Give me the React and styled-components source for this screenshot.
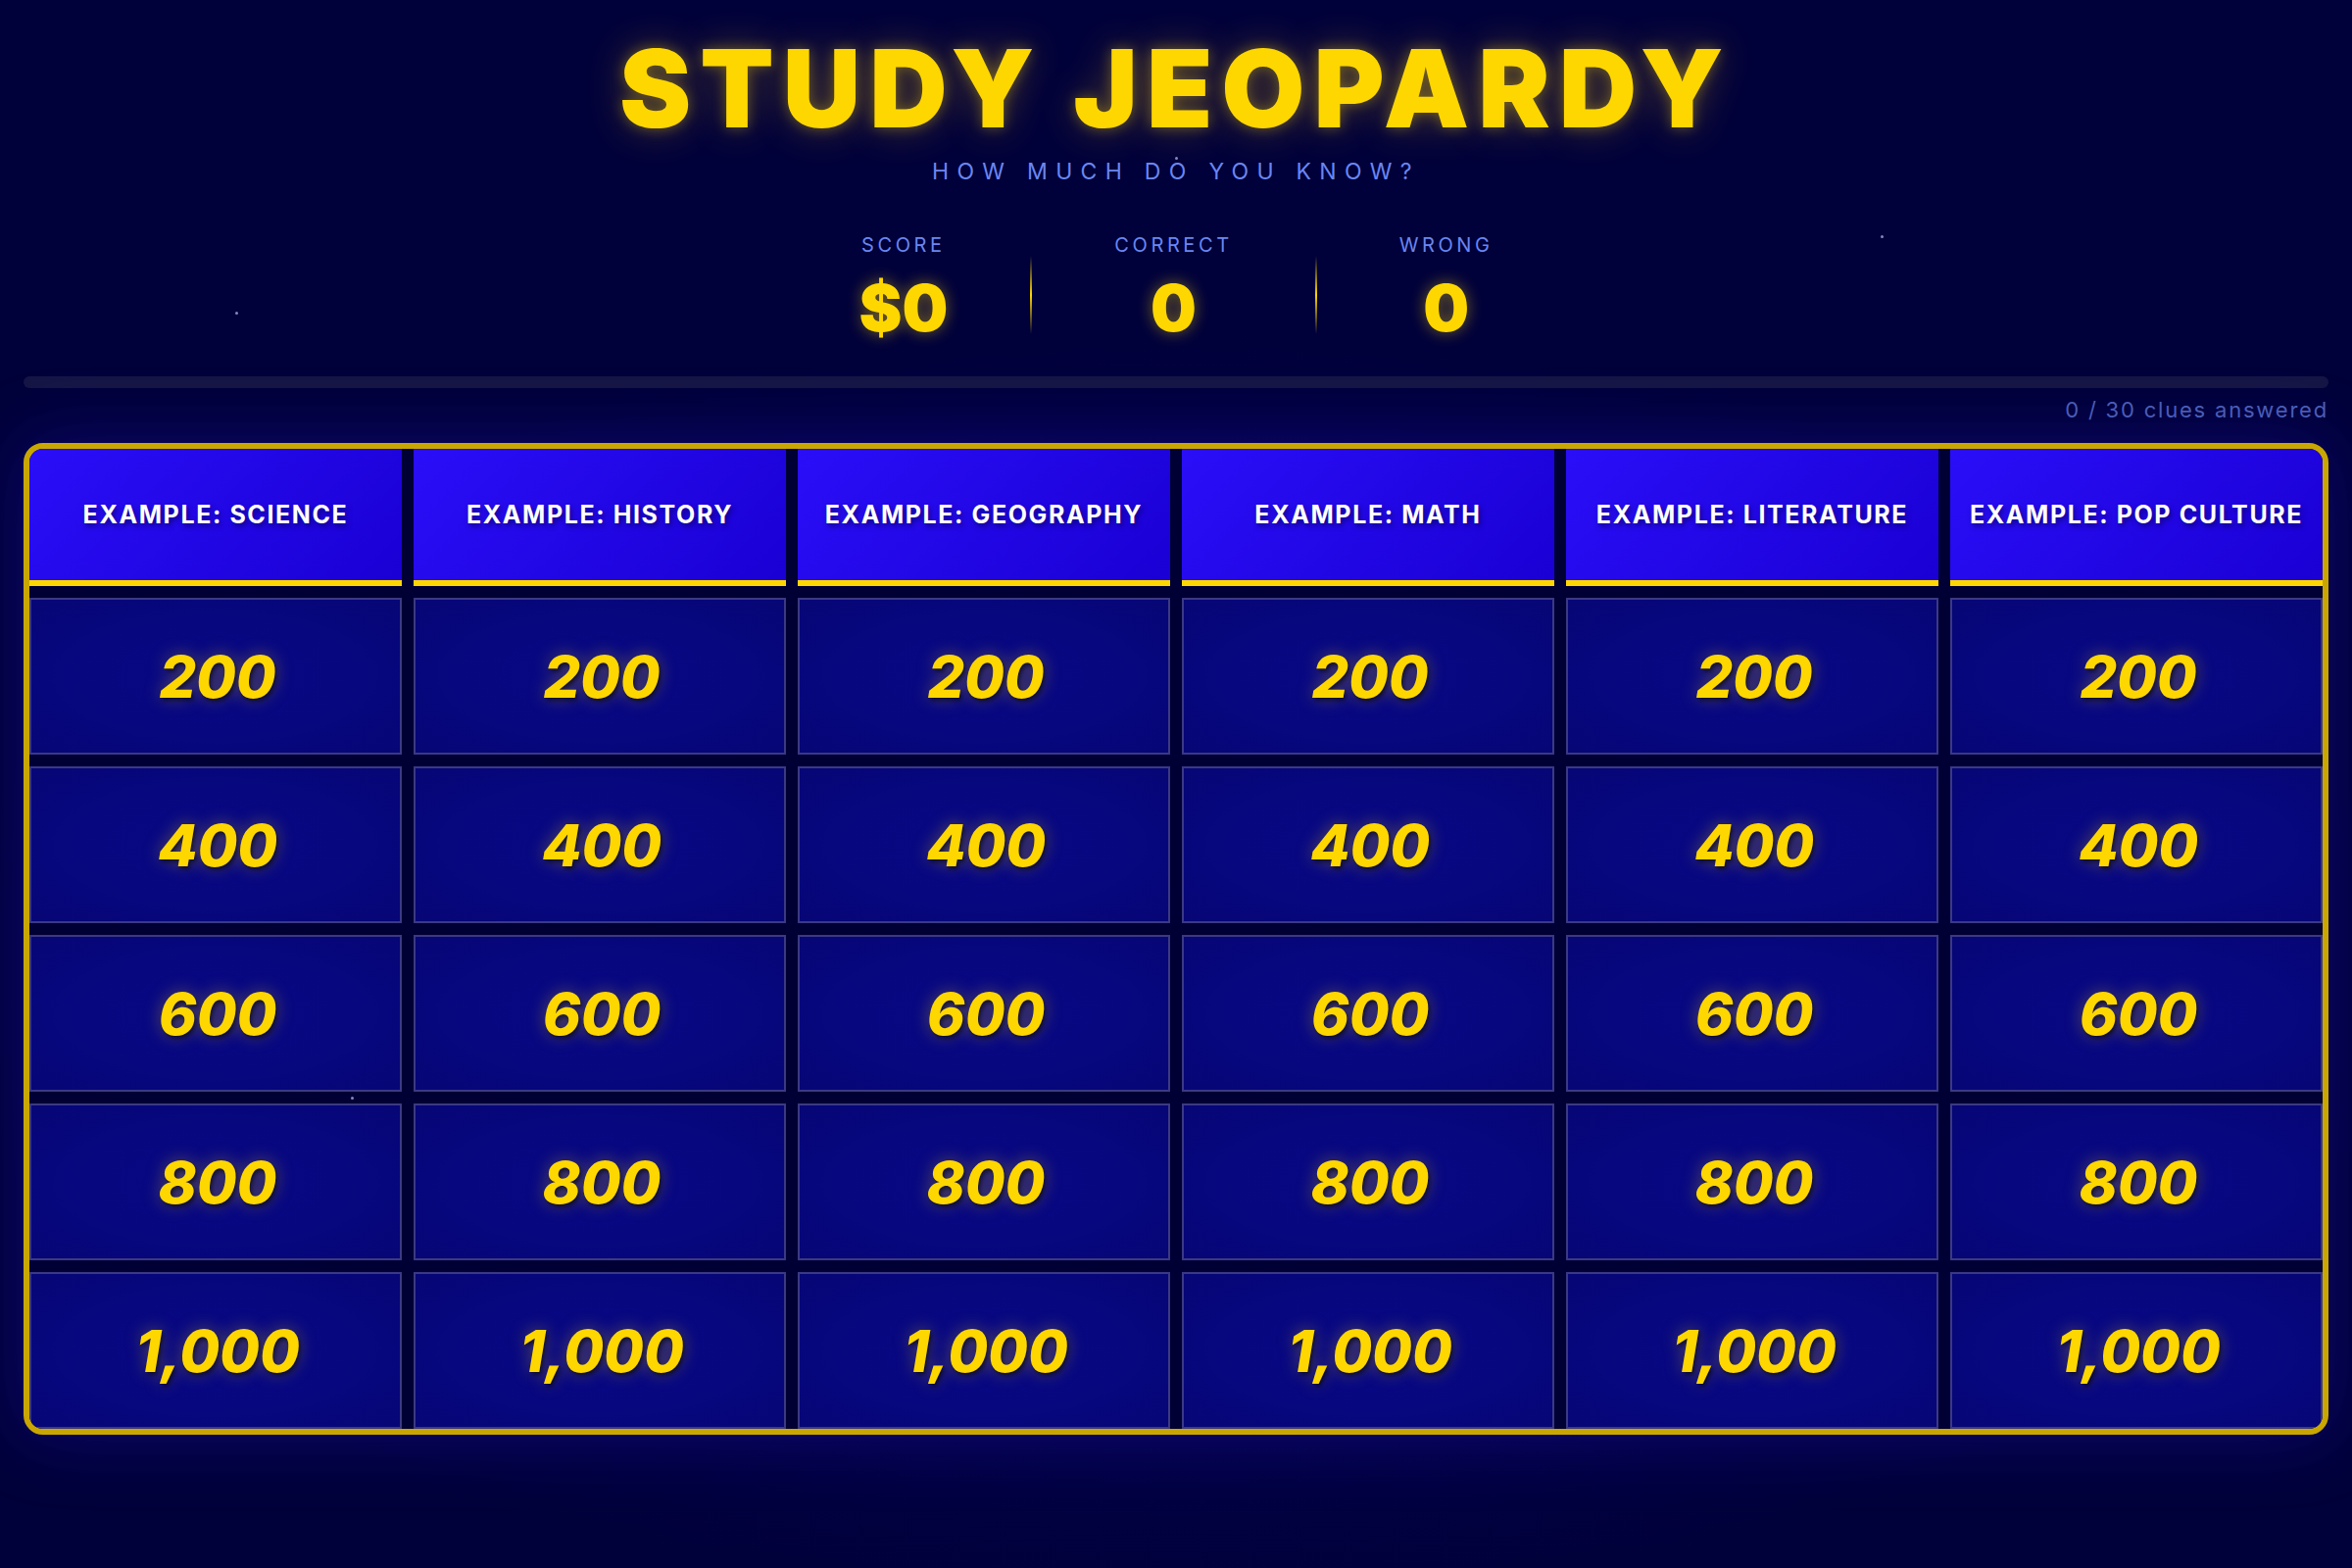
import React from "react";
import styled, { createGlobalStyle } from "styled-components";

const GlobalStyle = createGlobalStyle`
  html, body {
    margin: 0;
    padding: 0;
    background: #00003a;
  }
  body {
    font-family: "Inter", "Noto Sans", sans-serif;
    color: #fff;
  }
  * { box-sizing: border-box; }
`;

const categories = [
  "Example: Science",
  "Example: History",
  "Example: Geography",
  "Example: Math",
  "Example: Literature",
  "Example: Pop Culture",
];

const values = [200, 400, 600, 800, 1000];

const stars = [
  { x: 240, y: 318 },
  { x: 1919, y: 240 },
  { x: 358, y: 1119 },
  { x: 1199, y: 160 },
];

const Page = styled.div`
  position: relative;
  min-height: 1600px;
  padding: 35px 24px 0;
  background: radial-gradient(ellipse 70% 55% at 50% 62%, #0a0562 0%, #03024a 45%, #00003a 75%);
  overflow: hidden;
`;

const Star = styled.span`
  position: absolute;
  width: 3px;
  height: 3px;
  border-radius: 50%;
  background: rgba(190, 190, 255, 0.7);
`;

const Header = styled.header`
  display: flex;
  flex-direction: column;
  align-items: center;
`;

const Title = styled.h1`
  margin: 0;
  font-size: 110px;
  line-height: 1;
  font-weight: 900;
  letter-spacing: 9px;
  color: #ffd700;
  text-transform: uppercase;
  text-shadow: 0 0 14px rgba(255, 215, 0, 0.35), 0 0 40px rgba(255, 200, 0, 0.3);
`;

const Subtitle = styled.p`
  margin: 19px 0 0;
  font-size: 23px;
  line-height: 1;
  font-weight: 400;
  letter-spacing: 8.3px;
  color: #6a86f2;
  text-transform: uppercase;
`;

const Stats = styled.div`
  display: flex;
  align-items: center;
  gap: 84px;
  margin-top: 53px;
`;

const Stat = styled.div`
  display: flex;
  flex-direction: column;
  align-items: center;
  gap: 21px;
`;

const StatLabel = styled.span`
  font-size: 20px;
  line-height: 1;
  letter-spacing: 3.6px;
  color: #6a86f2;
  text-transform: uppercase;
`;

const StatValue = styled.span`
  font-size: 66px;
  line-height: 1;
  font-weight: 900;
  color: #ffd700;
  text-shadow: 0 0 16px rgba(255, 215, 0, 0.45);
`;

const Divider = styled.span`
  width: 2px;
  height: 80px;
  margin-top: 14px;
  background: linear-gradient(to bottom, transparent, #ffd700, transparent);
`;

const Progress = styled.div`
  margin-top: 37px;
  height: 12px;
  border-radius: 6px;
  background: #161645;
`;

const ProgressText = styled.div`
  margin-top: 11px;
  text-align: right;
  font-size: 22px;
  line-height: 1;
  letter-spacing: 1.8px;
  color: #4a5cb8;
`;

const Board = styled.div`
  margin-top: 23px;
  display: grid;
  grid-template-columns: repeat(6, 1fr);
  grid-template-rows: 140px repeat(5, 160px);
  gap: 12px;
  border: 6px solid #c9a700;
  border-radius: 20px;
  overflow: hidden;
  background: #000035;
  box-shadow: 0 0 70px rgba(40, 20, 200, 0.35);
`;

const CategoryCell = styled.div`
  display: flex;
  align-items: center;
  justify-content: center;
  text-align: center;
  white-space: nowrap;
  padding: 0 8px;
  background: linear-gradient(135deg, #2a0ef8 0%, #1a00d4 100%);
  border-bottom: 6px solid #ffd700;
  font-size: 25px;
  font-weight: 700;
  letter-spacing: 1.6px;
  text-transform: uppercase;
  color: #fff;
  text-shadow: 2px 3px 5px rgba(0, 0, 60, 0.55);
`;

const ClueCell = styled.button`
  display: flex;
  align-items: center;
  justify-content: center;
  padding: 0 0 0 4px;
  border: 2px solid #3b3984;
  background: radial-gradient(ellipse at center, #080886 0%, #07077e 60%, #060676 100%);
  font-family: inherit;
  font-size: 59px;
  font-weight: 800;
  font-style: italic;
  color: #ffd700;
  cursor: pointer;
  text-shadow: 2px 3px 4px rgba(0, 0, 0, 0.55), 0 0 18px rgba(255, 215, 0, 0.35);
`;

export default function App() {
  return (
    <>
      <GlobalStyle />
      <Page>
        {stars.map((s, i) => (
          <Star key={i} style={{ left: s.x, top: s.y }} />
        ))}
        <Header>
          <Title>Study Jeopardy</Title>
          <Subtitle>How much do you know?</Subtitle>
          <Stats>
            <Stat>
              <StatLabel>Score</StatLabel>
              <StatValue>$0</StatValue>
            </Stat>
            <Divider />
            <Stat>
              <StatLabel>Correct</StatLabel>
              <StatValue>0</StatValue>
            </Stat>
            <Divider />
            <Stat>
              <StatLabel>Wrong</StatLabel>
              <StatValue>0</StatValue>
            </Stat>
          </Stats>
        </Header>
        <Progress />
        <ProgressText>0 / 30 clues answered</ProgressText>
        <Board>
          {categories.map((c) => (
            <CategoryCell key={c}>{c}</CategoryCell>
          ))}
          {values.map((v) =>
            categories.map((c) => (
              <ClueCell key={c + v}>{v.toLocaleString("en-US")}</ClueCell>
            ))
          )}
        </Board>
      </Page>
    </>
  );
}
